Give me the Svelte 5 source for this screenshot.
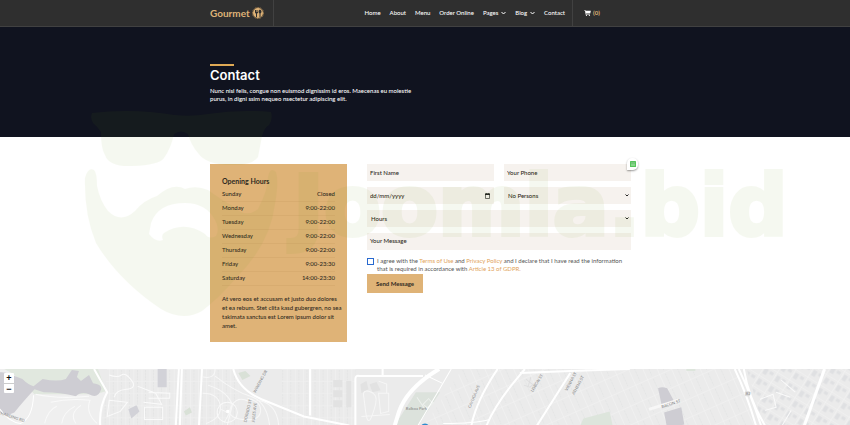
<script>
  const hours = [
    ['Sunday', 'Closed'],
    ['Monday', '9:00-22:00'],
    ['Tuesday', '9:00-22:00'],
    ['Wednesday', '9:00-22:00'],
    ['Thursday', '9:00-22:00'],
    ['Friday', '9:00-23:30'],
    ['Saturday', '14:00-23:30']
  ];
  const links = [
    { label: 'Home' },
    { label: 'About' },
    { label: 'Menu' },
    { label: 'Order Online' },
    { label: 'Pages', menu: true },
    { label: 'Blog', menu: true },
    { label: 'Contact' }
  ];
</script>

<div class="page">
  <header>
    <div class="container bar">
      <a class="logo" href="#home">
        <span>Gourmet</span>
        <svg width="12" height="12" viewBox="0 0 24 24" aria-hidden="true">
          <circle cx="12" cy="12" r="10" fill="#dfb377" />
          <circle cx="12" cy="12" r="11" fill="none" stroke="#b38c58" stroke-width="2" stroke-dasharray="2 1.4" />
          <path d="M6 6v5q0 2 2 2v7h2v-7q2 0 2-2V6h-1v4h-1V6H9v4H8V6zM15 20v-7q-2-1-2-4 0-3 3-4 3 1 3 4 0 3-2 4v7z" fill="#2f2f2f" />
        </svg>
      </a>
      <nav>
        {#each links as link}
          <a href="#{link.label}">
            {link.label}
            {#if link.menu}
              <svg width="5" height="4" viewBox="0 0 10 8" aria-hidden="true"><path d="M1 2l4 4 4-4" fill="none" stroke="#fff" stroke-width="2" /></svg>
            {/if}
          </a>
        {/each}
      </nav>
      <a class="cart" href="#cart" aria-label="Cart">
        <svg width="7" height="6" viewBox="0 0 576 512" aria-hidden="true">
          <path d="M0 0h100l16 64h460l-55 245H170l10 50h315v48H135L70 48H0z" fill="#fff" />
          <circle cx="200" cy="456" r="56" fill="#fff" /><circle cx="450" cy="456" r="56" fill="#fff" />
        </svg>
        <span>(0)</span>
      </a>
    </div>
  </header>

  <section class="hero">
    <div class="container">
      <div class="accent"></div>
      <h1>Contact</h1>
      <p>Nunc nisl felis, congue non euismod dignissim id eros. Maecenas eu molestie purus, in digni ssim nequeo nsectetur adipiscing elit.</p>
    </div>
  </section>

  <main class="container">
    <aside>
      <h2>Opening Hours</h2>
      <table>
        <tbody>
          {#each hours as [day, time]}
            <tr><th scope="row">{day}</th><td>{time}</td></tr>
          {/each}
        </tbody>
      </table>
      <p>At vero eos et accusam et justo duo dolores et ea rebum. Stet clita kasd gubergren, no sea takimata sanctus est Lorem ipsum dolor sit amet.</p>
    </aside>

    <form onsubmit={(e) => e.preventDefault()}>
      <input type="text" placeholder="First Name" aria-label="First Name" />
      <div class="field">
        <input type="tel" placeholder="Your Phone" aria-label="Your Phone" />
        <button class="helper" type="button" aria-label="Fill in">
          <svg width="6" height="6" viewBox="0 0 12 12"><rect width="12" height="12" rx="1" fill="#55c45a" /><path d="M2 4h8M2 8h8" stroke="#d7f3d8" stroke-width="1.5" /><path d="M3 4h2M7 4h2" stroke="#287b35" stroke-width="1.5" /></svg>
        </button>
      </div>
      <div class="field">
        <input type="text" placeholder="dd/mm/yyyy" aria-label="Date" />
        <svg class="calendar" width="5" height="6" viewBox="0 0 10 12" aria-hidden="true"><path d="M1 2h8v9H1z" fill="none" stroke="#222" stroke-width="1.3" /><path d="M0 1h10v3H0zM2 0h1v2H2zM7 0h1v2H7z" fill="#222" /></svg>
      </div>
      <div class="field">
        <select aria-label="Persons"><option>No Persons</option></select>
        <svg class="caret" width="4" height="3" viewBox="0 0 8 6" aria-hidden="true"><path d="M1 1l3 3 3-3" fill="none" stroke="#222" stroke-width="2" /></svg>
      </div>
      <div class="field wide">
        <select aria-label="Hours"><option>Hours</option></select>
        <svg class="caret" width="4" height="3" viewBox="0 0 8 6" aria-hidden="true"><path d="M1 1l3 3 3-3" fill="none" stroke="#222" stroke-width="2" /></svg>
      </div>
      <textarea class="wide" rows="1" placeholder="Your Message" aria-label="Your Message"></textarea>
      <div class="consent wide">
        <input id="agree" type="checkbox" />
        <label for="agree">I agree with the <a href="#terms">Terms of Use</a> and <a href="#privacy">Privacy Policy</a> and I declare that I have read the information that is required in accordance with <a href="#gdpr">Article 13 of GDPR.</a></label>
      </div>
      <button class="send" type="submit">Send Message</button>
    </form>
  </main>

  <section class="map" aria-label="Map">
    <svg class="tiles" viewBox="0 0 850 56" preserveAspectRatio="xMidYMin slice" aria-hidden="true">
      <defs>
        <pattern id="blocks" width="13" height="17" patternUnits="userSpaceOnUse" patternTransform="rotate(-24)">
          <path d="M0 0H13M0 0V17" stroke="#f3f3f3" stroke-width="1" />
          <path d="M6 2v13" stroke="#e4e5e5" stroke-width="1" stroke-dasharray="2 1" />
        </pattern>
        <pattern id="grid" width="8" height="12" patternUnits="userSpaceOnUse">
          <path d="M0 0H8M0 0V12" stroke="#f2f2f2" stroke-width="1" />
          <path d="M4 1v10" stroke="#e3e4e4" stroke-width="1" stroke-dasharray="2 1" />
        </pattern>
        <pattern id="industry" width="14" height="12" patternUnits="userSpaceOnUse" patternTransform="rotate(32)">
          <path d="M0 0H14M0 0V12" stroke="#f4f4f4" stroke-width="1" />
          <path d="M2 3h4v6H2zM8 3h4v3H8z" fill="#dfe0e2" />
        </pattern>
      </defs>
      <path d="M0 0H850V56H0z" fill="#ebebeb" />
      <path d="M110 0H240V56H104zM283 0H356V56H283z" fill="url(#grid)" />
      <path d="M462 0H732L755 56H424z" fill="url(#blocks)" />
      <path d="M744 0H850V56H760z" fill="url(#industry)" />
      <path d="M0 0H101L110 23 102 56H0z" fill="#efefef" />
      <path d="M8 0H101L109 22 98 25 38 25 17 5z" fill="#e1e8df" />
      <path d="M0 4Q7 2 13 5L26 10Q32 16 37 17L46 10Q61 13 69 10L75 1 82 2 80 8 84 12 92 6 96 14Q105 15 104 20 101 30 92 25 84 22 79 27 64 23 47 23L38 20Q26 33 18 43 9 48 0 41z" fill="#cecdd3" />
      <path d="M39 25Q61 30 92 27M54 33Q72 29 93 31 88 43 100 54M48 54Q51 41 60 37M65 54Q66 43 78 37M79 54Q72 44 84 36" fill="none" stroke="#f9f9f9" />
      <path d="M3 39Q13 53 24 54 36 49 37 26" fill="none" stroke="#fff" stroke-width="1" />
      <path d="M97 0 110 23Q102 37 103 56" fill="none" stroke="#fff" stroke-width="2" />
      <path d="M160 0h9v18h-9zM131 40l8-4 3 6-8 7z" fill="#d2d2d8" />
      <path d="M112 6q8 3 12 0t10 5-5 9-12 8M112 31l18 2-7 9-13 5zM140 17l18 7 6 11-18-2M147 38h18v12h-18zM151 23l21 1v5h-21" fill="none" stroke="#fafafa" />
      <path d="M181 0 178 56M184 0 182 56M204 0 201 56" stroke="#fff" stroke-width="2" />
      <path d="M186 42l6-4 2 5-6 3zM240 4l7-2 5 5-8 4z" fill="#d9e1d7" />
      <path d="M205 8q12 2 12-8M205 24q15 0 17 12t-14 18M210 16q20 6 24 20l-5 20M217 7q19 15 35 20t19 29M249 29q14 3 13 13t-18 8-11-13 17-5M223 40l8 4-5 9M258 31q20 2 22 25" fill="none" stroke="#f7f7f7" />
      <circle cx="229" cy="43" r="10" fill="none" stroke="#f9f9f9" /><path d="M228 42h3" stroke="#fff" stroke-width="3" />
      <path d="M235 0Q240 20 263 30L305 47 350 56" fill="none" stroke="#fff" stroke-width="2" />
      <path d="M311 0V46M383 0V6" stroke="#fff" stroke-width="2" />
      <path d="M356 56V10q0-4 4-3h63" fill="none" stroke="#fff" stroke-width="2" />
      <path d="M334 11h9v7h-9zM334 21h9v7h-9zM334 31h9v7h-9zM347 12h5v26h-5zM361 15l6-3 2 8-7 4zM370 15l7-2 4 8-8 2z" fill="#e2e2e2" />
      <path d="M364 25q0-4 5-3t7 5-3 18-7-4zM379 24h10v18l-8 2zM362 47l28-2M379 12l8 3v9" fill="none" stroke="#f6f6f6" stroke-width="1" />
      <path d="M416 23H440L418 56H395Z" fill="#dce2dc" />
      <path d="M417 28l8 12 9-7M429 29l-6 6 5 4 5-5-4-4" fill="none" stroke="#edf0ed" />
      <path d="M439 0Q407 19 399 43L395 56" fill="none" stroke="#fff" stroke-width="4" />
      <path d="M425 6L442 14M451 0L437 24 418 56M443 54Q475 54 489 50" fill="none" stroke="#fff" stroke-width="1" />
      <path d="M497 0Q476 31 471 56M524 0 519 6Q495 34 486 56M569 4L536 56M519 4L569 2 628 0" fill="none" stroke="#fff" stroke-width="2" />
      <path d="M523 16l6 2 5-4M525 10l10 8M530 8l-3 10" stroke="#dededf" stroke-width="1" fill="none" />
      <path d="M656 19Q660 17 665 19L673 34 660 38zM662 43l17-5 3 17-17 4z" fill="#cecdd3" />
      <path d="M582 49l26-7 3 14h-32zM684 0h9v2h-9z" fill="#dde5dc" />
      <path d="M647 40l29-9" stroke="#f7f7f7" stroke-width="3" />
      <path d="M732 0Q744 25 753 56M736 0Q748 25 758 56M741 0Q746 30 762 56" fill="none" stroke="#fff" stroke-width="2" />
      <path d="M821 0L801 56" stroke="#fff" stroke-width="3" />
      <path d="M757 30l13-5 3 13-11 3M773 23l14 5M778 11l14 12M788 41l-9 15" fill="none" stroke="#fafafa" />
      <rect x="742" y="22" width="5" height="5" rx="1" fill="#dcdcdc" /><text x="743" y="26" font-size="4">82</text>
      <circle cx="425" cy="58" r="4" fill="#2e8ccc" />
      <g class="roads">
        <text transform="translate(257 24) rotate(-62)">WINDING DR</text>
        <text transform="translate(248 53) rotate(-77)">DORADO ST</text>
        <text transform="translate(256 53) rotate(-83)">JULES AVE</text>
        <text transform="translate(4 45) rotate(18)">HARDING RD</text>
        <text transform="translate(470 39) rotate(-67)">CAYUGA AVE</text>
        <text transform="translate(532 23) rotate(-59)">LISBON ST</text>
        <text transform="translate(566 22) rotate(-62)">VIENNA ST</text>
        <text transform="translate(573 26) rotate(-62)">ATHENS ST</text>
        <text transform="translate(660 39) rotate(-19)">BACON ST</text>
        <text x="406" y="41">Balboa Park</text>
      </g>
    </svg>
    <div class="zoom"><button type="button" aria-label="Zoom in">+</button><button type="button" aria-label="Zoom out">−</button></div>
  </section>

  <svg class="watermark" width="720" height="230" viewBox="80 100 720 230" aria-hidden="true">
    <g fill="#6b9b14">
      <path d="M92 113Q133 108 174 115 192 117 208 114 240 109 271 112 273 120 269 125 264 128 262 136L258 157Q252 165 235 165 207 166 198 153 191 145 188 134 181 129 174 134 171 148 164 158 159 165 132 166 109 167 105 155 101 149 101 132 98 127 93 123 90 118 92 113Z" />
      <path d="M85 178Q88 167 94 170 97 173 97 186 100 201 108 211 121 224 135 211 144 200 157 196 173 182 185 189 196 185 208 190 223 201 233 206 246 219 258 209 268 190 268 177 270 166 276 172 279 182 275 204 270 244 237 277 218 299 202 311 183 322 161 309 119 281 96 243 84 214 85 178ZM149 234Q156 243 163 240 161 235 164 233 184 220 205 234 209 240 216 236 220 228 215 220 206 203 185 203 158 203 151 223Z" fill-rule="evenodd" />
      <text x="293" y="235">Joomla.bid</text>
    </g>
  </svg>
</div>

<style>
  :global(body) { margin: 0; background: #fff; }
  .page { position: relative; display: flex; flex-direction: column; min-height: 100vh; overflow: hidden; font: 500 6px/8px Lato, "Liberation Sans", sans-serif; color: #2f2a22; }
  .page * { box-sizing: border-box; }
  a { color: inherit; text-decoration: none; }
  h1, h2, p { margin: 0; }
  button, input, select, textarea { font: inherit; color: inherit; border: 0; border-radius: 0; margin: 0; }
  .container { width: 100%; max-width: 430px; margin: 0 auto; }
  header { background: #2f2f2f; border-bottom: 1px solid #414141; color: #fff; }
  .bar { display: flex; align-items: stretch; height: 26px; }
  .logo { display: flex; align-items: center; gap: 2px; width: 64px; border-right: 1px solid #414141; color: #dfb377; font-size: 10px; font-weight: 700; }
  nav { display: flex; align-items: center; justify-content: flex-end; gap: 9px; flex: 1; padding-right: 7px; }
  nav a { display: flex; align-items: center; gap: 3px; white-space: nowrap; }
  .cart { display: flex; align-items: center; gap: 2px; width: 68px; padding-left: 11px; border-left: 1px solid #414141; }
  .cart span { color: #dfb377; font-weight: 700; }
  .hero { height: 110px; padding-top: 37px; background: #10131f; color: #fff; }
  .accent { width: 24px; height: 2px; background: #dfa955; }
  h1 { margin: 2px 0 5px; font: 600 13px/14px Inter, "Liberation Sans", sans-serif; }
  .hero p { max-width: 204px; }
  main { display: grid; grid-template-columns: 137px 1fr; align-items: start; gap: 20px; padding: 27px 9px 27px 0; }
  aside { padding: 12px 4px 12px 12px; background: #dfb377; }
  h2 { font-size: 7px; line-height: 11px; font-weight: 700; }
  table { width: calc(100% - 8px); border-collapse: collapse; }
  th, td { height: 14px; padding: 0; border-bottom: 1px solid #d8ac70; font-weight: 500; text-align: left; }
  td { text-align: right; }
  aside p { margin-top: 8px; line-height: 9px; }
  form { display: grid; grid-template-columns: 1fr 1fr; gap: 6px 10px; }
  form > input, .field input, select, textarea { display: block; width: 100%; height: 17px; padding: 0 3px; background: #f6f2ee; appearance: none; outline: 0; resize: none; overflow: hidden; }
  form > input, .field input { padding-bottom: 1px; }
  textarea { padding: 4px 3px; }
  select { padding: 0 4px; }
  ::placeholder { color: #2f2a22; opacity: 1; }
  .field { position: relative; }
  .wide { grid-column: 1 / -1; }
  .calendar, .caret { position: absolute; top: 6px; right: 4px; pointer-events: none; }
  .caret { top: 7px; right: 2px; }
  .helper { position: absolute; top: -6px; right: -7px; width: 11px; height: 12px; padding: 0; display: grid; place-items: center; border-radius: 5px 5px 5px 0; background: #fff; box-shadow: 0 1px 2px #0006; }
  .consent { display: flex; align-items: flex-start; gap: 3px; padding-top: 1px; color: #555; font-weight: 400; }
  .consent input { appearance: none; flex: none; width: 7px; height: 7px; margin-top: 1px; border: 1px solid #2869cf; background: #fff; }
  .consent a { color: #dfa35a; }
  .send { justify-self: start; width: 56px; height: 19px; margin-top: -5px; padding: 0; background: #dfb377; font-weight: 700; }
  .map { position: relative; flex: 1; min-height: 56px; background: #ebebeb; }
  .tiles { position: absolute; inset: 0; width: 100%; height: 100%; }
  .tiles text { font-size: 4px; fill: #8e8e8e; }
  .zoom { position: absolute; top: 4px; left: 4px; width: 10px; display: flex; flex-direction: column; background: #fff; border-radius: 1px; }
  .zoom button { height: 10px; padding: 0; background: none; color: #111; font: 700 9px/10px "Liberation Sans", sans-serif; }
  .zoom button + button { border-top: 1px solid #ccc; }
  .watermark { position: absolute; top: 100px; left: calc(50% - 345px); pointer-events: none; opacity: .06; }
  .watermark text { font: 700 83px "DejaVu Sans", sans-serif; stroke: #6b9b14; stroke-width: 4px; }
</style>
